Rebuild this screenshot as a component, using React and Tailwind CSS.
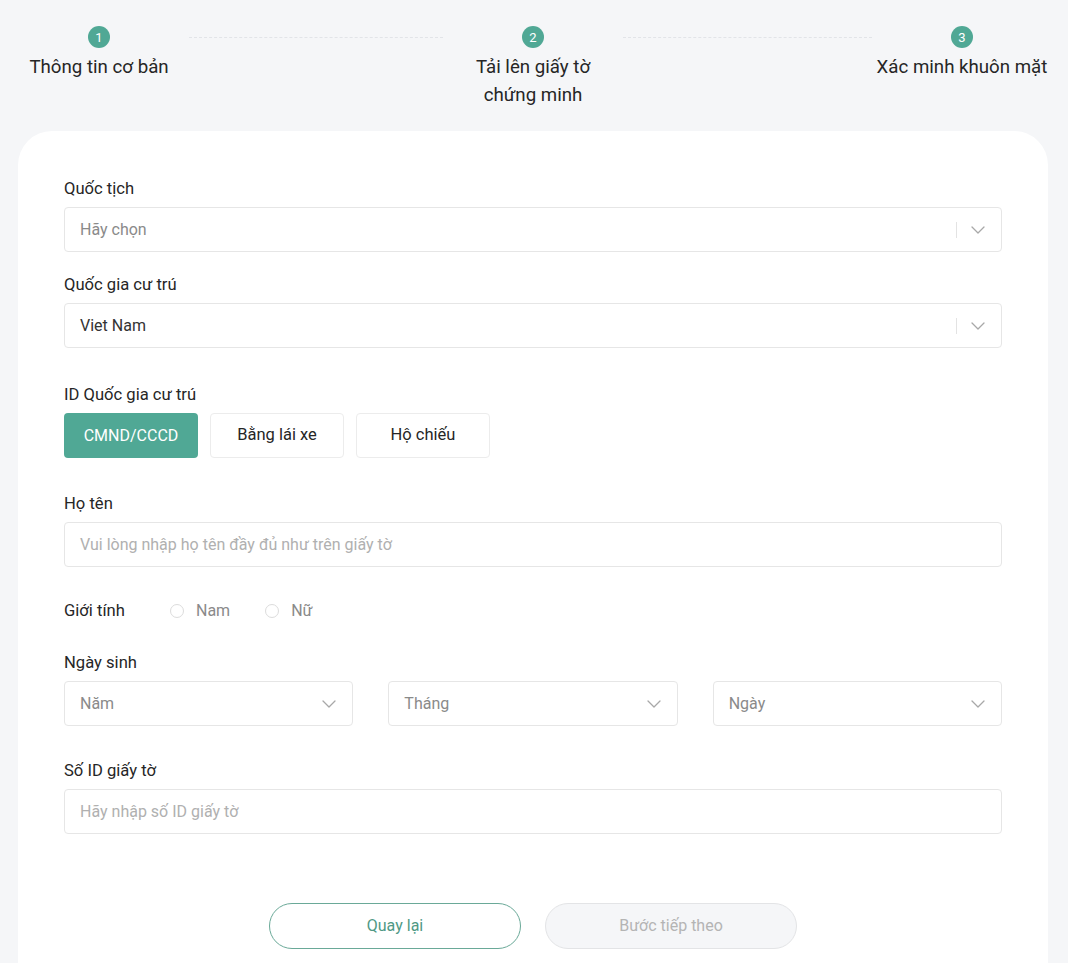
import React from "react";

const Chevron = ({ className = "" }) => (
  <svg width="14" height="8" viewBox="0 0 14 8" fill="none" className={className}>
    <path d="M1 1l6 6 6-6" stroke="#a8a8a8" strokeWidth="1.3" strokeLinecap="round" strokeLinejoin="round" />
  </svg>
);

const Step = ({ n, children }) => (
  <div className="w-[180px] shrink-0 flex flex-col items-center">
    <div className="w-[22px] h-[22px] rounded-full bg-[#50a895] text-white text-[13px] flex items-center justify-center leading-none">
      {n}
    </div>
    <div className="mt-[5px] text-[18.7px] leading-[28px] text-[#262626] text-center">{children}</div>
  </div>
);

const Line = ({ className = "" }) => (
  <div className={"h-[22px] flex items-center " + className}>
    <div className="w-full border-t border-dashed border-[#e2e4e8]" />
  </div>
);

const Label = ({ children, className = "" }) => (
  <div className={"text-[16.6px] leading-[24px] text-[#262626] " + className}>{children}</div>
);

const SelectBox = ({ value, placeholder, divider = false, className = "" }) => (
  <div className={"h-[45px] border border-[#e6e6e6] rounded-[4px] bg-white flex items-center pl-[15px] pr-[16px] " + className}>
    <span className={"flex-1 text-[16px] " + (value ? "text-[#333]" : "text-[#8a8a8a]")}>{value || placeholder}</span>
    {divider && <div className="w-px h-[16px] bg-[#e3e3e3] mr-[14px]" />}
    <Chevron />
  </div>
);

const TextInput = ({ placeholder }) => (
  <div className="h-[45px] border border-[#e6e6e6] rounded-[4px] bg-white flex items-center px-[15px]">
    <span className="text-[16px] text-[#b0b0b0]">{placeholder}</span>
  </div>
);

const Radio = ({ label }) => (
  <div className="flex items-center gap-[12px]">
    <div className="w-[14px] h-[14px] rounded-full border border-[#dcdcdc] bg-white" />
    <span className="text-[16px] text-[#8a8a8a]">{label}</span>
  </div>
);

export default function App() {
  return (
    <div className="min-h-screen bg-[#f5f6f8]" style={{ fontFamily: "Roboto, 'Noto Sans', sans-serif" }}>
      <div className="flex items-start pl-[9px] pr-[16px] pt-[26px]">
        <Step n={1}>Thông tin cơ bản</Step>
        <Line className="w-[254px] shrink-0" />
        <Step n={2}>
          <div className="max-w-[140px]">Tải lên giấy tờ chứng minh</div>
        </Step>
        <Line className="flex-1" />
        <Step n={3}>Xác minh khuôn mặt</Step>
      </div>

      <div className="ml-[18px] mr-[20px] mt-[22px] bg-white rounded-t-[34px] px-[46px] pt-[46px] pb-[40px]">
        <Label>Quốc tịch</Label>
        <SelectBox placeholder="Hãy chọn" divider className="mt-[6px]" />

        <Label className="mt-[21px]">Quốc gia cư trú</Label>
        <SelectBox value="Viet Nam" divider className="mt-[6px]" />

        <Label className="mt-[35px]">ID Quốc gia cư trú</Label>
        <div className="mt-[6px] flex gap-[12px]">
          <div className="w-[134px] h-[45px] rounded-[4px] bg-[#50a895] text-white text-[16px] flex items-center justify-center">CMND/CCCD</div>
          <div className="w-[134px] h-[45px] rounded-[4px] border border-[#ececec] text-[#262626] text-[16.5px] flex items-center justify-center">Bằng lái xe</div>
          <div className="w-[134px] h-[45px] rounded-[4px] border border-[#ececec] text-[#262626] text-[16.5px] flex items-center justify-center">Hộ chiếu</div>
        </div>

        <Label className="mt-[34px]">Họ tên</Label>
        <div className="mt-[6px]">
          <TextInput placeholder="Vui lòng nhập họ tên đầy đủ như trên giấy tờ" />
        </div>

        <div className="mt-[32px] flex items-center h-[24px]">
          <div className="w-[106px] text-[16.6px] text-[#262626]">Giới tính</div>
          <div className="flex items-center gap-[35px]">
            <Radio label="Nam" />
            <Radio label="Nữ" />
          </div>
        </div>

        <Label className="mt-[28px]">Ngày sinh</Label>
        <div className="mt-[6px] grid grid-cols-3 gap-[35px]">
          <SelectBox placeholder="Năm" />
          <SelectBox placeholder="Tháng" />
          <SelectBox placeholder="Ngày" />
        </div>

        <Label className="mt-[33px]">Số ID giấy tờ</Label>
        <div className="mt-[6px]">
          <TextInput placeholder="Hãy nhập số ID giấy tờ" />
        </div>

        <div className="mt-[69px] flex justify-center gap-[24px]">
          <div className="w-[252px] h-[46px] rounded-full border border-[#6aa998] text-[#4f9985] text-[16px] flex items-center justify-center">Quay lại</div>
          <div className="w-[252px] h-[46px] rounded-full border border-[#e3e4e6] bg-[#f5f6f8] text-[#b4b4b4] text-[16px] flex items-center justify-center">Bước tiếp theo</div>
        </div>
      </div>
    </div>
  );
}
